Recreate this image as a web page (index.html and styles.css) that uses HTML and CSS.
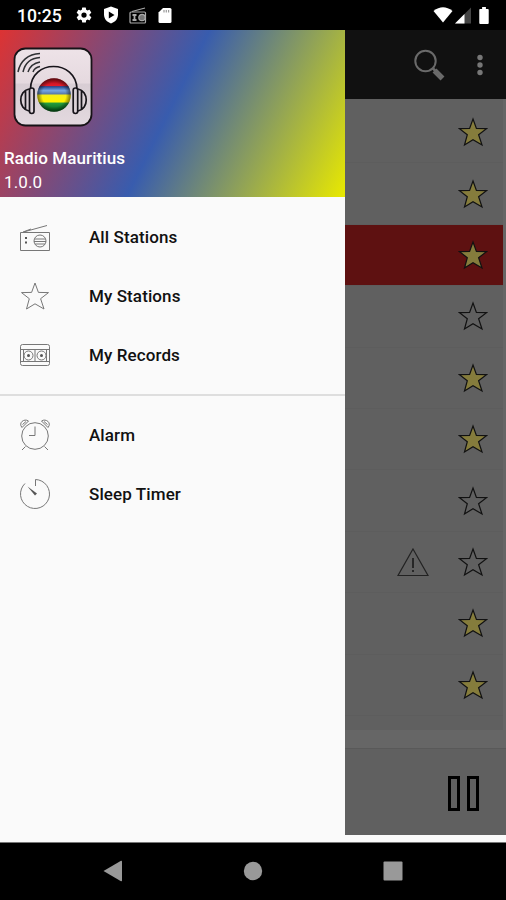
FILE: index.html
```html
<!DOCTYPE html>
<html lang="en">
<head>
    <meta charset="UTF-8">
    <meta name="viewport" content="width=device-width, initial-scale=1.0">
    <title>Radio Mauritius</title>
    <link rel="stylesheet" href="styles.css">
</head>
<body>
    <svg class="defs" width="0" height="0">
        <symbol id="star" viewBox="0 0 30 30">
            <path d="M15 2 L18.4 11.4 L28.5 11.6 L20.6 17.7 L24 28 L15 22.8 L6.5 28 L9.3 17.7 L1.5 11.6 L11.6 11.4 Z"/>
        </symbol>
    </svg>

    <div class="status-bar">
        <span class="clock">10:25</span>
        <svg class="gear" width="18" height="18" viewBox="0 0 24 24"><path fill="#fff" fill-rule="evenodd" d="M19.4 13a7.500 7.500 0 0 0 0-2l2.100-1.650a.5.5 0 0 0 .12-.64l-2-3.460a.5.5 0 0 0-.61-.22l-2.490 1a7.300 7.300 0 0 0-1.690-.98l-.38-2.650A.5.5 0 0 0 14 2h-4a.5.5 0 0 0-.49.42l-.38 2.650a7.700 7.700 0 0 0-1.690.98l-2.490-1a.5.5 0 0 0-.61.22l-2 3.460a.5.5 0 0 0 .12.64L4.600 11a7.900 7.900 0 0 0 0 2l-2.110 1.650a.5.5 0 0 0-.12.64l2 3.460c.12.22.39.3.61.22l2.490-1c.52.4 1.080.73 1.690.98l.38 2.650c.3.240.24.42.49.42h4a.5.5 0 0 0 .49-.42l.38-2.650a7.700 7.700 0 0 0 1.690-.98l2.490 1c.23.09.49 0 .61-.22l2-3.460a.5.5 0 0 0-.12-.64zM12 15.500a3.500 3.500 0 1 1 0-7 3.500 3.500 0 0 1 0 7z"/></svg>
        <svg class="shield" width="16" height="18" viewBox="0 0 16 18"><path fill="#fff" d="M8 .5 L15 3 V8.500 C15 13 12 16 8 17.500 C4 16 1 13 1 8.500 V3 Z"/><path d="M5.800 5.500 L11.500 9 L5.800 12.500 Z"/></svg>
        <svg class="mini-radio" width="18" height="17" viewBox="0 0 18 17" fill="none" stroke="#aaa" stroke-width="1.200"><rect x="1" y="5" width="15.500" height="11" rx="1"/><path d="M3 4.500 L16 1"/><path stroke-width="1.800" d="M3.500 8 h4 M3.500 13 h4 M5.500 8 v5"/><path d="M10.500 9 h5 M10.500 12 h5"/><circle cx="13" cy="10.500" r="3.200" fill="#777"/></svg>
        <svg class="sd" width="14" height="17" viewBox="0 0 14 17"><path fill="#fff" d="M5 1 H12 Q13.500 1 13.500 2.500 V14.500 Q13.500 16 12 16 H2 Q.5 16 .5 14.500 V5.500 Z"/><path stroke="#999" stroke-width="1.200" d="M6 3 v2.500 M8.300 3 v2.500 M10.600 3 v2.500"/></svg>
        <div class="signals">
            <svg width="20" height="16" viewBox="0 0 20 16"><path fill="#fff" d="M.5 4 Q10-3.500 19.500 4 L10 15.500 Z"/></svg>
            <svg width="16" height="17" viewBox="0 0 16 17"><path fill="#444" d="M16 .5 V16.500 H0 Z"/><path fill="#fff" d="M9.500 7 V16.500 H0 Z"/></svg>
            <svg class="battery" width="10" height="17" viewBox="0 0 10 18"><path fill="#fff" d="M3 0 H7 V2 H9 Q10 2 10 3 V17 Q10 18 9 18 H1 Q0 18 0 17 V3 Q0 2 1 2 H3 Z"/></svg>
        </div>
    </div>

    <div class="screen">
        <div class="drawer">
            <div class="drawer-header">
                <svg class="app-logo" width="80" height="80" viewBox="0 0 80 80">
                    <defs>
                        <linearGradient id="tile" x1="0" y1="0" x2="0" y2="1">
                            <stop offset="0" stop-color="#eee3e8"/>
                            <stop offset=".45" stop-color="#e5d9df"/>
                            <stop offset=".46" stop-color="#d8cdd4"/>
                            <stop offset="1" stop-color="#e3d9df"/>
                        </linearGradient>
                        <linearGradient id="flag" x1="0" y1="0" x2="0" y2="1">
                            <stop offset="0" stop-color="#a50f1b"/>
                            <stop offset=".23" stop-color="#e51b2b"/>
                            <stop offset=".25" stop-color="#254b93"/>
                            <stop offset=".37" stop-color="#75a6e5"/>
                            <stop offset=".47" stop-color="#5779a8"/>
                            <stop offset=".5" stop-color="#f5ef16"/>
                            <stop offset=".7" stop-color="#fff200"/>
                            <stop offset=".75" stop-color="#239b3c"/>
                            <stop offset="1" stop-color="#075d19"/>
                        </linearGradient>
                        <radialGradient id="shade">
                            <stop offset=".7" stop-color="#000" stop-opacity="0"/>
                            <stop offset="1" stop-color="#000" stop-opacity=".5"/>
                        </radialGradient>
                    </defs>
                    <rect x="1.500" y="1.500" width="77" height="77" rx="11" fill="url(#tile)" stroke="#171317" stroke-width="1.800"/>
                    <g fill="none" stroke="#2f3033" stroke-width="1.500">
                        <path d="M5 25 C7 14 15 7 27 6.500"/>
                        <path d="M10 25 C12 16 18 11 27 10.500"/>
                        <path d="M15 25 C17 19 21 16 27 15"/>
                        <path d="M20 25 C21 22 24 20 27 19.500"/>
                    </g>
                    <circle cx="41" cy="48" r="16.800" fill="url(#flag)"/>
                    <circle cx="41" cy="48" r="16.800" fill="url(#shade)"/>
                    <g fill="none" stroke="#17141a" stroke-width="1.700">
                        <path d="M17.500 42 C18 12 63 12 64 42"/>
                        <rect x="16.500" y="41" width="4.500" height="25.500" rx="2.200"/>
                        <rect x="60.200" y="41" width="4.500" height="25.500" rx="2.200"/>
                        <path d="M16 42 C5 44 5 62 16 64 M12.500 44 V62 M65 42 C76 44 76 62 65 64 M68.500 44 V62"/>
                    </g>
                </svg>
                <div class="app-name">Radio Mauritius</div>
                <div class="app-version">1.0.0</div>
            </div>
            <div class="menu">
                <div class="menu-item">
                    <svg class="menu-icon" viewBox="0 0 32 32"><path d="M1.500 11.500 H30.500 V29.500 H1.500 Z M4.500 11 L28 4.500 M4 11 L12 8"/><circle cx="21" cy="20" r="6"/><path d="M15.500 18 H26.500 M15 20.500 H27 M16 23 H26"/><path class="solid" d="M6 16 h2 v2 h-2 z M6 20.500 h2 v2 h-2 z"/></svg>
                    <span>All Stations</span>
                </div>
                <div class="menu-item">
                    <svg class="menu-icon" viewBox="0 0 32 32"><use href="#star" x="1" y="1" width="30" height="30"/></svg>
                    <span>My Stations</span>
                </div>
                <div class="menu-item">
                    <svg class="menu-icon" viewBox="0 0 32 32"><rect x="1.500" y="5.500" width="29" height="21" rx="2"/><path d="M2 10.500 H30 M2 22.500 H30 M4.500 11 V22 M27.500 11 V22 M16 11 V22"/><circle cx="9.500" cy="16.500" r="4.500"/><circle cx="22.500" cy="16.500" r="4.500"/><circle class="solid" cx="9.500" cy="16.500" r="1.500"/><circle class="solid" cx="22.500" cy="16.500" r="1.500"/></svg>
                    <span>My Records</span>
                </div>
            </div>
            <div class="menu menu-tools">
                <div class="menu-item">
                    <svg class="menu-icon" viewBox="0 0 32 32"><circle cx="16" cy="17" r="13.300"/><path d="M16 7.500 V16.500 H10 M6.500 27.500 L3 31 M25.500 27.500 L29 31 M3 8.500 C-1 4 5-1 9.500 2 Z M29 8.500 C33 4 27-1 22.500 2 Z M3.500 5.500 L7 2.500 M28.500 5.500 L25 2.500"/></svg>
                    <span>Alarm</span>
                </div>
                <div class="menu-item">
                    <svg class="menu-icon" viewBox="0 0 32 32"><path d="M16.500 8 V1.500 A14.500 14.500 0 1 1 6 5.500"/><path class="solid" d="M8.500 8.500 L18 15.500 L16 17.500 Z"/></svg>
                    <span>Sleep Timer</span>
                </div>
            </div>
        </div>

        <div class="content">
            <div class="app-bar">
                <svg width="32" height="32" viewBox="0 0 32 32" fill="none" stroke="#6a6a6a"><circle cx="12.500" cy="12" r="10.200" stroke-width="2"/><path stroke-width="2.500" d="M19.500 19 L22.500 22"/><path stroke-width="5.500" d="M21.500 21.500 L29.500 29.500"/></svg>
                <svg class="more" width="6" height="22" viewBox="0 0 6 22" fill="#777"><circle cx="3" cy="3.500" r="2.700"/><circle cx="3" cy="11" r="2.700"/><circle cx="3" cy="18.500" r="2.700"/></svg>
            </div>
            <div class="stations">
                <div class="station"><svg class="star favorite"><use href="#star"/></svg></div>
                <div class="station"><svg class="star favorite"><use href="#star"/></svg></div>
                <div class="station playing"><svg class="star favorite"><use href="#star"/></svg></div>
                <div class="station"><svg class="star"><use href="#star"/></svg></div>
                <div class="station"><svg class="star favorite"><use href="#star"/></svg></div>
                <div class="station"><svg class="star favorite"><use href="#star"/></svg></div>
                <div class="station"><svg class="star"><use href="#star"/></svg></div>
                <div class="station">
                    <svg class="warning" width="32" height="30" viewBox="0 0 32 30"><path d="M16 2 L31 28.500 H1 Z"/><path class="mark" d="M16 11 V21 M16 23 V25"/></svg>
                    <svg class="star"><use href="#star"/></svg>
                </div>
                <div class="station"><svg class="star favorite"><use href="#star"/></svg></div>
                <div class="station"><svg class="star favorite"><use href="#star"/></svg></div>
            </div>
            <div class="player">
                <div class="pause"></div>
                <div class="pause"></div>
            </div>
        </div>
    </div>

    <div class="nav-bar">
        <svg width="20" height="22" viewBox="0 0 20 22"><path d="M.5 11 L18 .8 Q19 .5 19 1.500 V20.500 Q19 21.500 18 21.200 Z"/></svg>
        <svg width="20" height="22" viewBox="0 0 20 22"><circle cx="10" cy="11" r="9.200"/></svg>
        <svg width="20" height="22" viewBox="0 0 20 22"><rect x=".5" y="1.500" width="19" height="19" rx="1"/></svg>
    </div>
</body>
</html>
```

FILE: styles.css
```css
body {
    margin: 0;
    width: 506px;
    height: 900px;
    display: flex;
    flex-direction: column;
    overflow: hidden;
    background-color: #fafafa;
    font-family: Roboto, sans-serif;
}
svg {
    display: block;
    flex-shrink: 0;
}
.defs {
    position: absolute;
}

.status-bar {
    display: flex;
    align-items: center;
    box-sizing: border-box;
    height: 30px;
    padding: 0 17px 0 17px;
    background-color: #000;
    color: #fff;
}
.clock {
    width: 44px;
    margin-right: 14px;
    font-size: 17.6px;
    font-weight: 500;
    line-height: 30px;
    padding-top: 2px;
}
.shield { margin-left: 10px; }
.mini-radio { margin-left: 10px; }
.sd { margin-left: 11px; }
.signals {
    display: flex;
    align-items: center;
    margin-left: auto;
}
.signals svg { margin-left: 2px; }
.signals .battery { margin-left: 8px; }

.screen {
    display: flex;
    height: 805px;
    border-bottom: 7px solid #fafafa;
}
.drawer {
    width: 345px;
    background-color: #fafafa;
}
.drawer-header {
    box-sizing: border-box;
    height: 167px;
    padding: 17px 4px 0;
    background: linear-gradient(116.5deg, #dd3333, #385cae 49%, #e9e900);
    color: #fff;
    font-size: 17px;
}
.app-logo { margin-left: 9px; }
.app-name {
    margin-top: 20px;
    font-weight: 500;
    line-height: 22px;
    letter-spacing: 0.1px;
}
.app-version {
    line-height: 26px;
    letter-spacing: 0.1px;
}
.menu {
    box-sizing: border-box;
    height: 197px;
    padding-top: 10px;
}
.menu-tools {
    padding-top: 9px;
    border-top: 2px solid #dedede;
}
.menu-item {
    display: flex;
    align-items: center;
    height: 59px;
    padding-left: 19px;
    color: #111;
    font-size: 17px;
    font-weight: 500;
    letter-spacing: 0.1px;
}
.menu-icon {
    width: 32px;
    height: 32px;
    margin-right: 38px;
    fill: none;
    stroke: #777;
    stroke-width: 1;
}
.menu-icon .solid {
    fill: #555;
    stroke: none;
}

.content {
    display: flex;
    flex-direction: column;
    width: 161px;
    background-color: #666;
}
.app-bar {
    display: flex;
    align-items: center;
    justify-content: flex-end;
    box-sizing: border-box;
    height: 69px;
    padding-right: 23px;
    background-color: #111;
}
.app-bar .more { margin-left: 32px; }
.stations {
    box-sizing: border-box;
    width: 158px;
    height: 631px;
    padding-top: 3px;
    background-color: #606060;
}
.station {
    display: flex;
    align-items: center;
    justify-content: flex-end;
    box-sizing: border-box;
    height: 61.4px;
    padding-right: 15px;
    border-bottom: 1px solid #5d5d5d;
}
.station.playing {
    background-color: #5e1111;
}
.star {
    width: 30px;
    height: 30px;
    fill: none;
    stroke: #111;
    stroke-width: 1.2;
}
.star.favorite { fill: #857c3c; }
.warning {
    margin-right: 29px;
    fill: none;
    stroke: #222;
    stroke-width: 1.2;
}
.warning .mark { stroke-width: 1.8; }
.player {
    display: flex;
    align-items: center;
    justify-content: flex-end;
    gap: 7px;
    box-sizing: border-box;
    height: 87px;
    margin-top: 18px;
    padding: 3px 27px 0 0;
    border-top: 1px solid #595959;
    background-color: #606060;
}
.pause {
    box-sizing: border-box;
    width: 12px;
    height: 35px;
    border: 3px solid #000;
}

.nav-bar {
    display: flex;
    align-items: center;
    justify-content: space-between;
    box-sizing: border-box;
    height: 58px;
    padding: 0 103px 2px;
    border-top: 1px solid #777;
    background-color: #000;
    fill: #999;
}
```
